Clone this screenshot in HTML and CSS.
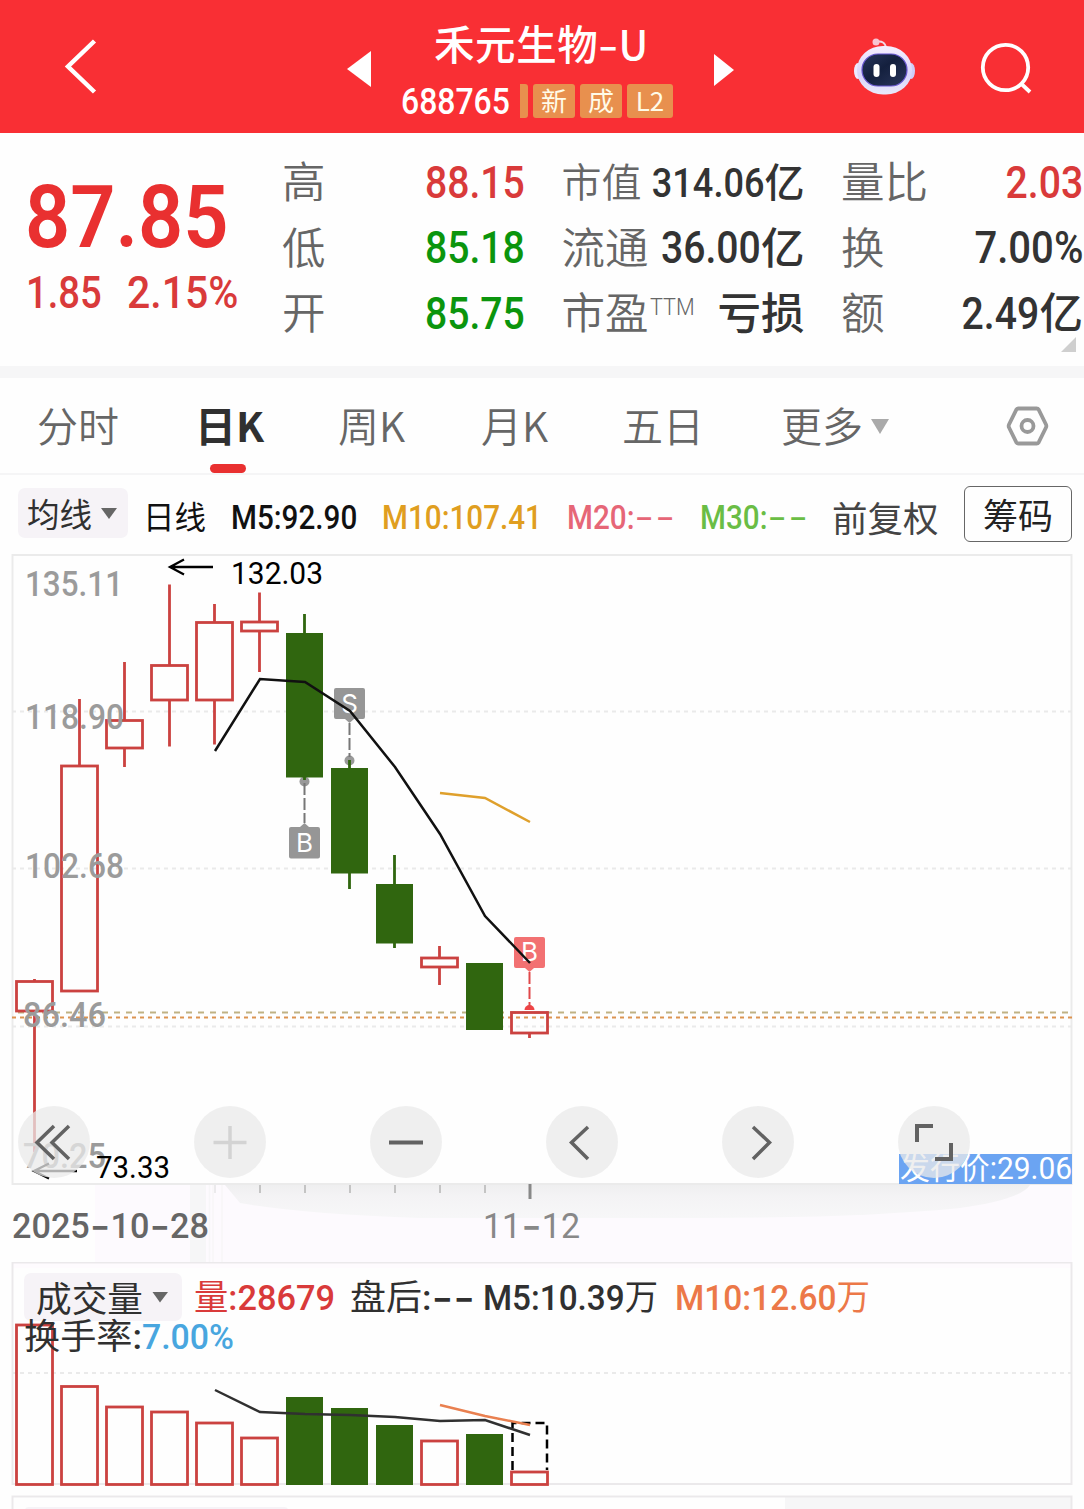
FILE: index.html
```html
<!DOCTYPE html>
<html lang="zh-CN">
<head>
<meta charset="utf-8">
<title>禾元生物-U 688765</title>
<link rel="stylesheet" href="styles.css">
</head>
<body>
<header class="topbar">
  <svg class="back" width="34" height="60" viewBox="64 36 34 60"><path d="M94.500 41 68 66.500 94.500 92" fill="none" stroke="#fff" stroke-width="4.500"/></svg>
  <svg class="prev" width="24" height="36" viewBox="0 0 24 36"><path d="M24 0V36L0 18Z" fill="#fff"/></svg>
  <div class="stock">
    <h1>禾元生物<s>-</s>U</h1>
    <div class="code-row">
      <div class="code"><span class="num">688765</span></div>
      <i class="tag sliver"></i><span class="tag">新</span><span class="tag">成</span><span class="tag wide">L2</span>
    </div>
  </div>
  <svg class="next" width="20" height="32" viewBox="0 0 20 32"><path d="M0 0V32L20 16Z" fill="#fff"/></svg>
  <svg class="robot" width="62" height="60" viewBox="853 37 62 60">
    <defs>
      <linearGradient id="shell" x1="0" y1="0" x2="0" y2="1"><stop offset="0" stop-color="#f6efff"/><stop offset=".6" stop-color="#d9d4fa"/><stop offset="1" stop-color="#e9e9fb"/></linearGradient>
      <linearGradient id="visor" x1="0" y1="0" x2="1" y2="1"><stop offset="0" stop-color="#27355b"/><stop offset=".45" stop-color="#14203e"/><stop offset="1" stop-color="#2a365c"/></linearGradient>
    </defs>
    <path d="M876 42q9-2 10 6" fill="none" stroke="#f3d7e4" stroke-width="2"/>
    <circle cx="876" cy="42" r="3.500" fill="#f7c5d2"/>
    <ellipse cx="858" cy="71" rx="4" ry="8" fill="#eee9ff"/><ellipse cx="911" cy="71" rx="4" ry="8" fill="#cfcdf8"/>
    <rect x="857" y="46" width="55" height="48.500" rx="26" ry="24" fill="url(#shell)"/>
    <rect x="862" y="54" width="45" height="32" rx="16" fill="url(#visor)" stroke="#6655cf" stroke-width="1.200"/>
    <rect x="873.500" y="64" width="6" height="13" rx="3" fill="#fff"/><rect x="890" y="64" width="6" height="13" rx="3" fill="#fff"/>
  </svg>
  <svg class="search" width="54" height="54" viewBox="979 41 54 54"><g fill="none" stroke="#fff" stroke-width="3.800"><circle cx="1005.500" cy="67.500" r="22.700"/><path d="M1021.500 84 1030 92"/></g></svg>
</header>

<section class="quote">
  <div class="last">
    <div class="price"><span class="num">87.85</span></div>
    <div class="change"><span class="num">1.85</span><span class="num pct">2.15%</span></div>
  </div>
  <div class="facts">
    <div class="fact"><label>高</label><b class="num up">88.15</b></div>
    <div class="fact"><label class="s40">市值</label><b class="num s41">314.06</b><b class="han s40">亿</b></div>
    <div class="fact"><label>量比</label><b class="num up">2.03</b></div>
    <div class="fact"><label>低</label><b class="num down">85.18</b></div>
    <div class="fact"><label>流通</label><b class="num">36.00</b><b class="han">亿</b></div>
    <div class="fact"><label>换</label><b class="num pct">7.00%</b></div>
    <div class="fact"><label>开</label><b class="num down">85.75</b></div>
    <div class="fact"><label>市盈<sup>TTM</sup></label><b class="han">亏损</b></div>
    <div class="fact"><label>额</label><b class="num">2.49</b><b class="han">亿</b></div>
  </div>
  <i class="corner"></i>
</section>

<nav class="tabs">
  <a>分时</a><a class="on">日K</a><a>周K</a><a>月K</a><a>五日</a><a>更多<i class="caret"></i></a>
  <svg width="44" height="44" viewBox="1006 405 44 44"><g fill="none" stroke="#999" stroke-width="3.800"><path d="M1018.500 408.500h18q1.500 0 2.300 1.300l7.200 14.700q.7 1.500 0 3l-7.200 14.700q-.8 1.300-2.300 1.300h-18q-1.500 0-2.300-1.300l-7.200-14.700q-.7-1.500 0-3l7.200-14.700q.8-1.300 2.300-1.300Z"/><circle cx="1027.500" cy="426" r="6"/></g></svg>
</nav>

<section class="averages">
  <div><span class="pill">均线<i class="caret"></i></span></div>
  <div class="cycle">日线</div>
  <div><span class="num">M5:92.90</span></div>
  <div class="m10"><span class="num">M10:107.41</span></div>
  <div class="m20"><span class="num">M20:<s>--</s></span></div>
  <div class="m30"><span class="num">M30:<s>--</s></span></div>
  <div class="adjust">前复权</div>
  <button>筹码</button>
</section>

<svg class="kline" width="1084" height="708" viewBox="0 554 1084 708">
  <defs>
    <linearGradient id="fade" x1="0" y1="0" x2="0" y2="1"><stop offset="0" stop-color="#efeff0"/><stop offset=".35" stop-color="#f4f3f5"/><stop offset="1" stop-color="#f7f7f8"/></linearGradient>
  </defs>
  <rect x="95" y="1185" width="977" height="77" fill="#fdfafe"/>
  <path d="M190 1185H206V1262H190Z" fill="#f6f6f7"/>
  <path d="M209.500 1185V1262M213 1185V1262M222 1185V1262" stroke="#f7f6f8" stroke-width="1.500"/>
  <path d="M225 1185H1030Q1020 1200 960 1208Q860 1218 700 1218H420Q300 1214 240 1203Z" fill="url(#fade)"/>
  <path d="M12.500 1184V555H1071.500V1184Z" fill="none" stroke="#ebebeb" stroke-width="2"/>
  <path d="M12 711.500H1072M12 868.500H1072M12 1026.500H1072" class="grid"/>
  <path d="M18 1012.500H1072" stroke="#c0b283" stroke-width="2" stroke-dasharray="6 6"/>
  <path d="M12 1017.500H1072" stroke="#dc9350" stroke-width="2.200" stroke-dasharray="4 4"/>

  <g class="rise">
    <path d="M34.500 979V981M34.500 1012V1152M79.500 699V765M124.500 662V720M124.500 749V767M169.500 584.500V665M169.500 701V746.500M214.500 604V622M214.500 701V744.500M259.500 592.500V621M259.500 632V672M439.500 946V957M439.500 968V985M529.500 1034V1038"/>
    <rect x="16.500" y="981.500" width="36" height="29.500"/>
    <rect x="61.500" y="766" width="36" height="225"/>
    <rect x="106.500" y="720.500" width="36" height="27.500"/>
    <rect x="151.500" y="665.500" width="36" height="34.500"/>
    <rect x="196.500" y="622.500" width="36" height="77.500"/>
    <rect x="241.500" y="622" width="36" height="9"/>
    <rect x="421.500" y="958" width="36" height="9"/>
    <rect x="511.500" y="1012.500" width="36" height="20.500"/>
  </g>
  <g fill="#999"><circle cx="304.500" cy="781.500" r="5"/><circle cx="349.500" cy="760.500" r="5"/></g>
  <path d="M524.500 1010a5 5 0 0 1 10 0Z" fill="#ef4345"/>
  <g class="fall">
    <path d="M304.500 614V780M349.500 760V889M394.500 855V948"/>
    <path d="M286 633H323V777.500H286ZM331 768H368V873.500H331ZM376 884H413V943.500H376ZM466 963H503V1030H466Z" class="solid"/>
  </g>
  <g stroke-width="2" stroke-dasharray="12 3" fill="none"><path d="M304.500 783V823M349.500 723V757" stroke="#777"/><path d="M529.500 972V1008" stroke="#e0484a"/></g>
  <path d="M291 827h9l4.500-4 4.500 4h9q2 0 2 2v27.500q0 2-2 2h-27q-2 0-2-2V829q0-2 2-2ZM336 688h27q2 0 2 2v27q0 2-2 2h-9l-4.500 4-4.500-4h-9q-2 0-2-2v-27q0-2 2-2Z" fill="#969696"/>
  <path d="M516 937h27q2 0 2 2v27q0 2-2 2h-9l-4.500 4-4.500-4h-9q-2 0-2-2v-27q0-2 2-2Z" fill="#f27172"/>
  <g class="mark"><text x="304.500" y="852">B</text><text x="349.500" y="712.500">S</text><text x="529.500" y="961">B</text></g>
  <path d="M215 751 260 679 305 682 350 711 395 767 440 834 485 916 530 963" fill="none" stroke="#111" stroke-width="2.500"/>
  <path d="M440 793 485 798 530 822" fill="none" stroke="#dfa02c" stroke-width="2.500"/>

  <g class="scale">
    <text x="25" y="595.500" textLength="98" lengthAdjust="spacingAndGlyphs">135.11</text>
    <text x="25" y="728.500" textLength="99" lengthAdjust="spacingAndGlyphs">118.90</text>
    <text x="25" y="877.500" textLength="99" lengthAdjust="spacingAndGlyphs">102.68</text>
    <text x="23" y="1026.500" textLength="83" lengthAdjust="spacingAndGlyphs">86.46</text>
    <text x="23" y="1167.500" textLength="83" lengthAdjust="spacingAndGlyphs">70.25</text>
  </g>
  <g fill="none" stroke="#000" stroke-width="2.300"><path d="M213 567H170M184 559.500 170 567 184 574.500"/><path d="M77 1171H34M49 1163.500 34 1171 49 1178.500"/></g>
  <g class="extreme">
    <text x="231" y="584" textLength="92" lengthAdjust="spacingAndGlyphs">132.03</text>
    <text x="96" y="1178" textLength="74" lengthAdjust="spacingAndGlyphs">73.33</text>
  </g>
  <rect x="899" y="1154" width="173" height="30" fill="#6ba4f2"/>
  <text x="900" y="1179" class="issue" textLength="172" lengthAdjust="spacingAndGlyphs">发行价:29.06</text>

  <g fill="#e9e9e9" fill-opacity=".75"><circle cx="54" cy="1142" r="36"/><circle cx="230" cy="1142" r="36"/><circle cx="406" cy="1142" r="36"/><circle cx="582" cy="1142" r="36"/><circle cx="758" cy="1142" r="36"/><circle cx="934" cy="1142" r="36"/></g>
  <g fill="none" stroke="#626262" stroke-width="3.500">
    <path d="M54 1126 37 1142.500 54 1159M69 1126 52 1142.500 69 1159"/>
    <path d="M230 1126V1159M213.500 1142.500H246.500" stroke="#d3d3d3"/>
    <path d="M389 1142.500H423" stroke-width="4"/>
    <path d="M588 1127 571.500 1142.500 588 1159M753 1127 769.500 1142.500 753 1159"/>
    <path d="M917 1142V1126H933M951 1143V1159H935" stroke-width="4"/>
  </g>
  <path d="M260 1185V1193M305 1185V1193M350 1185V1193M395 1185V1193M440 1185V1193M485 1185V1193" stroke="#c4c4c4" stroke-width="2"/>
  <path d="M215 1185V1193" stroke="#e5e5e6" stroke-width="1.500"/>
  <path d="M530 1184V1199" stroke="#888" stroke-width="3"/>
  <text x="12" y="1237.500" class="date" textLength="197" lengthAdjust="spacingAndGlyphs">2025<tspan class="dash" dy="4">-</tspan><tspan dy="-4">10</tspan><tspan class="dash" dy="4">-</tspan><tspan dy="-4">28</tspan></text>
  <text x="483" y="1237.500" class="date light" textLength="97" lengthAdjust="spacingAndGlyphs">11<tspan class="dash" dy="4">-</tspan><tspan dy="-4">12</tspan></text>
</svg>

<svg class="volume" width="1084" height="247" viewBox="0 1262 1084 247">
  <rect x="13" y="1262" width="1058" height="6" fill="#fefbfe"/>
  <path d="M12.500 1484V1262.500H1071.500V1484Z" fill="none" stroke="#ebe9eb" stroke-width="2"/>
  <path d="M12 1373H1072" class="grid"/>
  <rect x="24" y="1273" width="158" height="48" rx="7" fill="#f6f3f7"/>
  <g class="rise">
    <rect x="16.500" y="1325" width="36" height="159.500"/><rect x="61.500" y="1386.500" width="36" height="98"/><rect x="106.500" y="1407" width="36" height="77.500"/><rect x="151.500" y="1412" width="36" height="72.500"/><rect x="196.500" y="1423" width="36" height="61.500"/><rect x="241.500" y="1438" width="36" height="46.500"/><rect x="421.500" y="1441" width="36" height="43.500"/><rect x="511.500" y="1472" width="36" height="12.500"/>
  </g>
  <path d="M286 1397H323V1485H286ZM331 1408H368V1485H331ZM376 1425H413V1485H376ZM466 1434H503V1485H466Z" fill="#30660f"/>
  <path d="M512.500 1470V1423H547V1470" fill="none" stroke="#000" stroke-width="2.500" stroke-dasharray="9 5"/>
  <path d="M215 1390 260 1412 305 1414 350 1415 395 1417 440 1421 485 1420 530 1435" fill="none" stroke="#303030" stroke-width="2.500"/>
  <path d="M440 1405 485 1416 530 1425" fill="none" stroke="#e98050" stroke-width="2.500"/>
  <path d="M152.500 1292H168L160 1302.500Z" fill="#666"/>
  <g class="legend">
    <text x="36" y="1311.500" class="han" textLength="107" lengthAdjust="spacingAndGlyphs">成交量</text>
    <text x="194" y="1310" class="red" textLength="141" lengthAdjust="spacingAndGlyphs"><tspan class="han">量</tspan>:28679</text>
    <text x="350" y="1310" textLength="125" lengthAdjust="spacingAndGlyphs"><tspan class="han">盘后</tspan>:<tspan class="dash" dy="4">--</tspan></text>
    <text x="483" y="1310" textLength="175" lengthAdjust="spacingAndGlyphs">M5:10.39<tspan class="han">万</tspan></text>
    <text x="675" y="1310" class="orange" textLength="195" lengthAdjust="spacingAndGlyphs">M10:12.60<tspan class="han">万</tspan></text>
    <text x="24" y="1349" textLength="118" lengthAdjust="spacingAndGlyphs"><tspan class="han">换手率</tspan>:</text>
    <text x="142" y="1348.500" class="blue" textLength="92" lengthAdjust="spacingAndGlyphs">7.00%</text>
  </g>
  <rect x="785" y="1497" width="287" height="12" fill="#f6f6f7"/>
  <path d="M12.500 1509V1496.500H1071.500V1509" fill="none" stroke="#ebe9eb" stroke-width="2"/>
  <path d="M25 1509q1-2 4-2H284q3 0 4 2Z" fill="#f6f3f7"/>
</svg>
</body>
</html>
```
FILE: styles.css
```css
* { box-sizing: border-box; }
body {
  margin: 0;
  width: 1084px;
  height: 1509px;
  overflow: hidden;
  background: #fefefe;
  color: #333;
  font-family: Roboto, "Noto Sans CJK SC", sans-serif;
}
svg { display: block; flex: none; }
s { display: inline-block; text-decoration: none; }
.num {
  display: inline-block;
  flex: none;
  font-family: Roboto, sans-serif;
  font-weight: 500;
  white-space: nowrap;
  transform: scaleX(.885);
  transform-origin: left center;
}

/* Title bar */
.topbar {
  display: flex;
  align-items: flex-start;
  height: 132.500px;
  background: #f92f34;
  color: #fff;
}
.back { margin: 36px 0 0 64px; }
.prev { margin: 51px 0 0 249px; }
.stock { width: 343px; padding-top: 13px; }
.stock h1 {
  margin: 0;
  padding-left: 63px;
  font: 500 40.500px/60px "Noto Sans CJK SC", sans-serif;
  letter-spacing: .6px;
  white-space: nowrap;
}
.stock h1 s { width: 20px; transform: scaleX(1.4); transform-origin: left center; }
.code-row { display: flex; height: 34px; margin-top: 11px; padding-left: 30px; }
.code { width: 119px; font-size: 36.500px; line-height: 36px; }
.code .num { transform: scaleX(.875); }
.tag {
  width: 42px;
  margin-right: 5px;
  border-radius: 3px;
  background: #e8904e;
  color: #fffbe8;
  font: 400 26px/31px "Noto Sans CJK SC", sans-serif;
  text-align: center;
}
.tag.sliver { width: 8px; border-radius: 0 3px 3px 0; }
.tag.wide { width: 46px; margin: 0; }
.next { margin: 54px 0 0; }
.robot { margin: 37px 0 0 119px; }
.search { margin: 41px 0 0 64px; }

/* Quote */
.quote {
  position: relative;
  display: flex;
  height: 245.500px;
  padding: 17px 0 0 26px;
  border-bottom: 12px solid #f6f6f7;
}
.last { width: 256px; color: #e93030; }
.price { padding-top: 23px; font-size: 88px; line-height: 88px; }
.price .num { font-weight: 600; transform: translateX(-1px) scaleX(.9); }
.change { display: flex; margin-top: 7px; font-size: 45px; line-height: 50px; color: #d93a3a; }
.change .num { width: 101px; transform: scaleX(.85); }
.change .pct { transform: scaleX(.91); }
.facts {
  display: grid;
  grid-template: repeat(3, 65.500px) / 243px 243px 242px;
  column-gap: 36.500px;
}
.fact { display: flex; align-items: center; justify-content: flex-end; font-size: 45px; line-height: 1; }
.fact label {
  width: 0;
  margin-right: auto;
  padding-bottom: 5px;
  color: #666;
  font: 350 43.500px/1 "Noto Sans CJK SC", sans-serif;
  white-space: nowrap;
}
.fact sup { display: inline-block; position: relative; top: 1px; margin-left: 1px; font: 300 24px/1 Roboto, sans-serif; transform: scaleX(.9); transform-origin: left; }
.fact .num { transform-origin: right center; transform: scaleX(.87); }
.fact .pct { transform: scaleX(.89); }
.fact .han { flex: none; padding-bottom: 5px; font: 500 43.500px/1 "Noto Sans CJK SC", sans-serif; }
.fact .s40 { font-size: 40px; }
.fact .s41 { font-size: 41.500px; }
.up { color: #d93a3a; }
.down { color: #0b950d; }
.corner {
  position: absolute;
  right: 8px;
  top: 204px;
  border-left: 15px solid transparent;
  border-bottom: 15px solid #cfcfcf;
}

/* Period tabs */
.tabs {
  display: grid;
  grid-template-columns: 158px 143px 143px 141px 159px 225px 44px;
  align-items: center;
  height: 97px;
  padding-left: 37px;
  border-bottom: 2px solid #f5f5f6;
  color: #666;
  font: 350 41px/88px "Noto Sans CJK SC", sans-serif;
}
.tabs a { display: flex; align-items: center; height: 97px; padding-bottom: 5px; }
.tabs a.on { position: relative; color: #303030; font-weight: 700; }
.tabs a.on::after {
  content: "";
  position: absolute;
  left: 15px;
  bottom: 2px;
  width: 36px;
  height: 9px;
  border-radius: 5px;
  background: #e93030;
}
.caret { border: solid transparent; border-width: 15px 9px 0; border-top-color: #aaa; margin: 4px 0 0 8px; }

/* Moving averages */
.averages {
  display: grid;
  grid-template-columns: 125px 88px 151px 185px 133px 132px 132px 108px;
  height: 79px;
  padding: 11px 0 0 18px;
  font-size: 33.500px;
  line-height: 63px;
  color: #111;
}
.pill {
  display: flex;
  align-items: center;
  width: 110px;
  height: 50px;
  margin-top: 2px;
  padding-left: 9px;
  border-radius: 7px;
  background: #f6f3f7;
  font: 400 32.500px/1 "Noto Sans CJK SC", sans-serif;
  color: #303030;
}
.pill .caret { margin: 0 0 0 9px; border-width: 11px 8px 0; border-top-color: #666; }
.cycle { font: 400 31.500px/58px "Noto Sans CJK SC", sans-serif; }
.averages s { width: 30px; font-family: Inter, sans-serif; font-weight: 400; letter-spacing: 1px; transform: scaleX(1.45); transform-origin: left center; }
.dash { font-family: Inter, sans-serif; font-size: 46px; font-weight: 400; }
.m10 { color: #e09e20; }
.m20 { color: #e66677; }
.m30 { color: #6abd45; }
.adjust { font: 400 35.500px/61px "Noto Sans CJK SC", sans-serif; color: #444; }
.averages button {
  height: 56px;
  padding: 0;
  border: 1.500px solid #666;
  border-radius: 6px;
  background: none;
  color: #222;
  font: 400 35px/52px "Noto Sans CJK SC", sans-serif;
}

/* Charts */
.grid { stroke: #eaeaea; stroke-width: 1.800; stroke-dasharray: 4 4; }
.rise { fill: none; stroke: #cb4240; stroke-width: 2.800; }
.fall { fill: none; stroke: #30660f; stroke-width: 2.800; }
.fall .solid { fill: #30660f; stroke: none; }
.mark { fill: #fff; font: 400 26px Inter, sans-serif; text-anchor: middle; }
.scale { fill: #9b9b9b; font: 500 35px Roboto, sans-serif; }
.extreme { fill: #000; font: 400 31.500px Roboto, sans-serif; }
.issue { fill: #fff; font: 400 30.500px Roboto, "Noto Sans CJK SC", sans-serif; }
.date { fill: #666; font: 500 35px Roboto, sans-serif; }
.date.light { fill: #888; font-weight: 400; }
.legend { fill: #303030; font: 500 35px Roboto, "Noto Sans CJK SC", sans-serif; }
.legend .han { font-weight: 400; }
.legend .red { fill: #d93a3a; }
.legend .orange { fill: #ec7848; }
.legend .blue { fill: #48a6df; }
```
